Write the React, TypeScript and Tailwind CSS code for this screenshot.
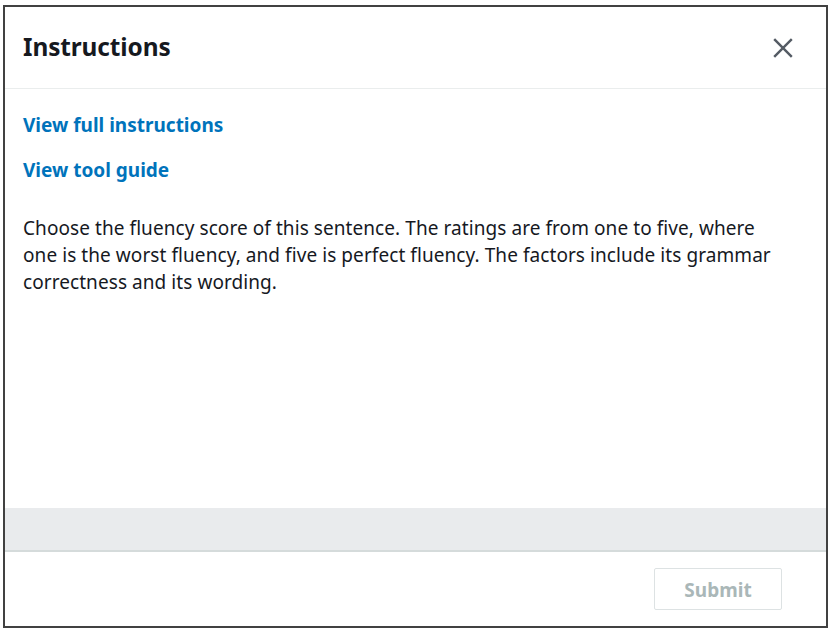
export default function App() {
  return (
    <div className="w-[831px] h-[630px] bg-white pt-[5px] pl-[3px]" style={{ fontFamily: '"Noto Sans", "Open Sans", sans-serif' }}>
      <div className="w-[825px] h-[623px] border-2 border-[#414141] flex flex-col">
        {/* header */}
        <div className="h-[82px] flex items-center justify-between pl-[18px] pr-[32px] border-b border-[#eaeded] shrink-0">
          <h1 className="text-[24.4px] font-bold text-[#16191f] tracking-[-0.1px] mt-[-1px]">Instructions</h1>
          <svg width="22" height="22" viewBox="0 0 20 20" className="text-[#545b64]">
            <path d="M2 2 L18 18 M18 2 L2 18" stroke="currentColor" strokeWidth="2.2" fill="none" />
          </svg>
        </div>
        {/* body */}
        <div className="flex-1 pl-[18px] pr-[40px] pt-[23px]">
          <a href="#" className="block text-[19px] font-bold text-[#0073bb] leading-[26px]">View full instructions</a>
          <a href="#" className="block text-[19px] font-bold text-[#0073bb] leading-[26px] mt-[19px]">View tool guide</a>
          <p className="mt-[32px] text-[19px] leading-[27px] tracking-[0.07px] text-[#16191f]">
            Choose the fluency score of this sentence. The ratings are from one to five, where one is the worst fluency, and five is perfect fluency. The factors include its grammar correctness and its wording.
          </p>
        </div>
        {/* gray band */}
        <div className="h-[44px] bg-[#e9ebed] border-b-2 border-[#d5dbdb] shrink-0" />
        {/* footer */}
        <div className="h-[74px] flex items-center justify-end pr-[44px] shrink-0">
          <button className="w-[128px] h-[42px] border border-[#dde2e3] rounded-[2px] text-[19px] font-bold text-[#aab7b8] bg-white pt-[3px]">Submit</button>
        </div>
      </div>
    </div>
  );
}
